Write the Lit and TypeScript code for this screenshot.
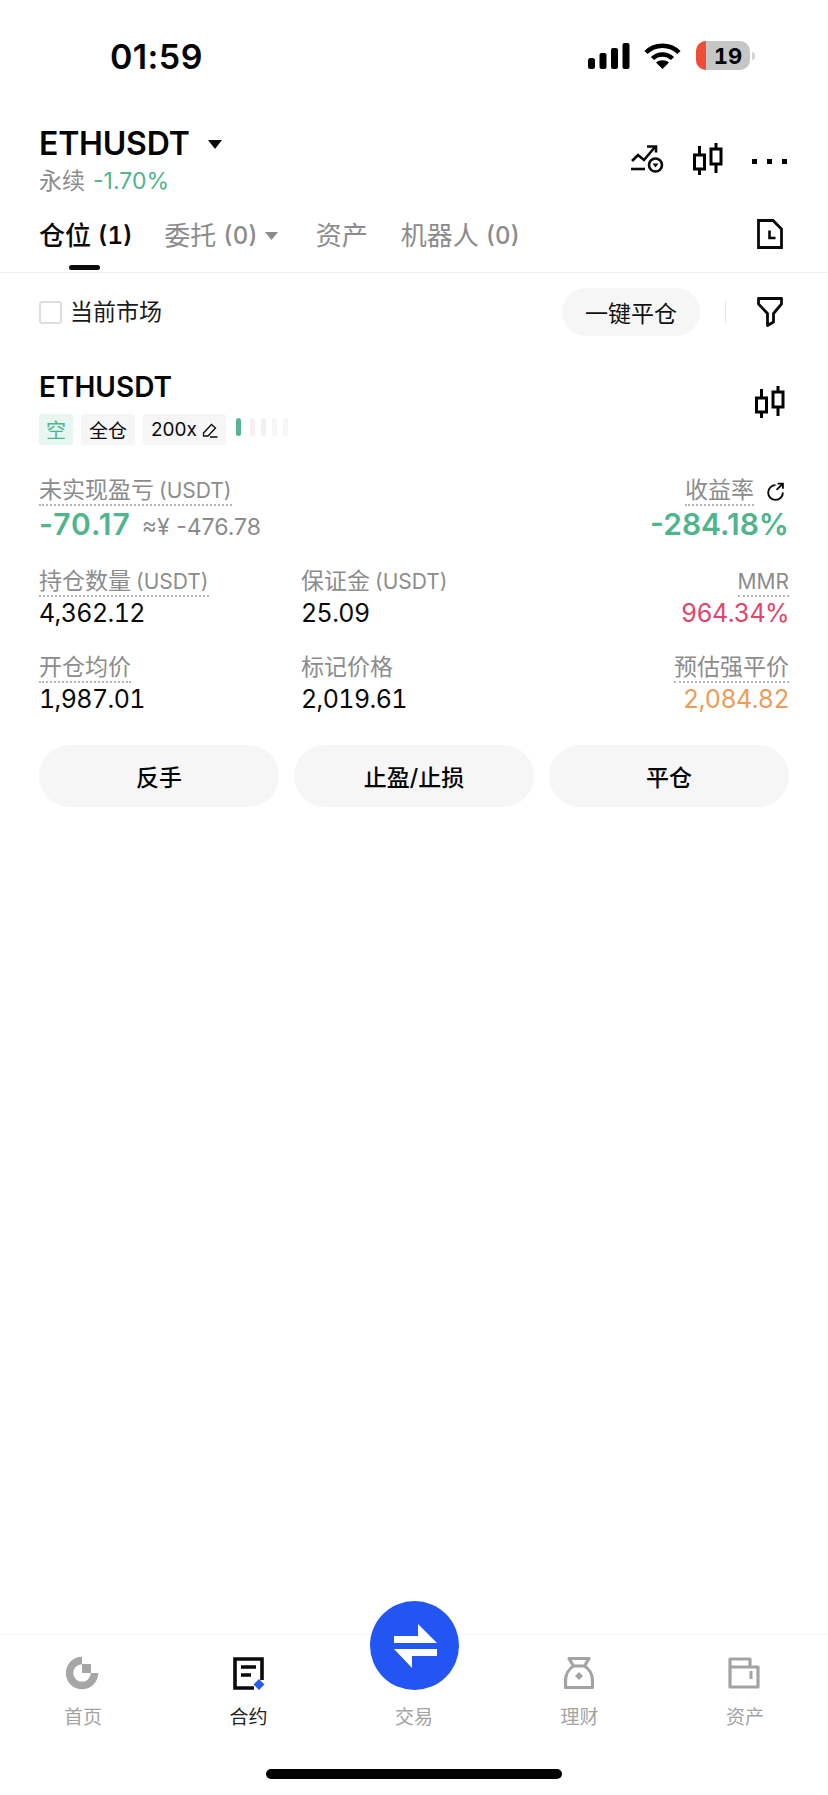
import { LitElement, html, css, svg } from "lit";
import { customElement } from "lit/decorators.js";

const candle = html`<svg width="30" height="32" viewBox="0 0 30 32" fill="none" stroke="#000" stroke-width="3"><rect x="1.5" y="12" width="10" height="14"/><rect x="18" y="6" width="10" height="15"/><path d="M6.5 3v8M6.5 26v6M23 0v6M23 21v9"/></svg>`;

const stats = [
  { l: "持仓数量", u: "(USDT)", v: "4,362.12" },
  { l: "保证金", u: "(USDT)", v: "25.09", plain: true },
  { l: "", u: "MMR", v: "964.34%", c: "red" },
  { l: "开仓均价", u: "", v: "1,987.01" },
  { l: "标记价格", u: "", v: "2,019.61", plain: true },
  { l: "预估强平价", u: "", v: "2,084.82", c: "orange" },
];

const navIcons = [
  svg`<path d="M16 4.5A12.5 12.5 0 1 0 28.5 17" fill="none" stroke="#a6a6a6" stroke-width="7.5"/><rect x="16" y="8" width="9" height="9" fill="#a6a6a6"/>`,
  svg`<path d="M30 24V3H3v29h19M9 11h15M9 19h10" fill="none" stroke="#0a0a0a" stroke-width="3.6"/><path d="M27 23l5.5 5.5-5.5 5.5-5.5-5.5z" fill="#2a5bea"/>`,
  null,
  svg`<path d="M6 2.5h20l-4.5 7.5c4 2.5 8 8 8 14.500v7h-27v-7c0-6.500 4-12 8-14.500zM10.500 10h11" fill="none" stroke="#a3a3a3" stroke-width="3.2" stroke-linejoin="round"/><path d="M16 16l4 4-4 4-4-4z" fill="#a3a3a3"/>`,
  svg`<path d="M2 3h20v8h8v20H2zM2 11h20" fill="none" stroke="#a3a3a3" stroke-width="3.200" stroke-linejoin="round"/><path d="M23 15v8" stroke="#a3a3a3" stroke-width="3"/>`,
];

const navLabels = ["首页", "合约", "交易", "理财", "资产"];

@customElement("app-root")
export class AppRoot extends LitElement {
  static styles = css`
    :host {
      display: block;
      width: 828px;
      height: 1795px;
      background: #fff;
      color: #050505;
      font-family: Inter, "Noto Sans CJK SC", sans-serif;
      overflow: hidden;
    }
    * { box-sizing: border-box; }
    svg { display: block; flex: none; }
    .page { display: flex; flex-direction: column; height: 1795px; }
    .main { flex: 1; }

    .status {
      height: 112px;
      display: flex;
      align-items: flex-start;
      justify-content: space-between;
      padding: 39px 73px 0 110px;
    }
    .time { font-size: 34px; line-height: 35px; font-weight: 600; letter-spacing: 0.4px; }
    .status-icons { display: flex; align-items: center; gap: 14px; margin-top: 2px; }
    .battery {
      width: 54px;
      height: 29px;
      border-radius: 10px;
      background: #c6c6c6;
      overflow: hidden;
      display: flex;
      align-items: center;
      font-size: 22px;
      font-weight: 700;
      font-variant-numeric: tabular-nums;
    }
    .battery-red { width: 10px; height: 100%; background: #ee4d36; flex: none; }
    .battery-num { flex: 1; text-align: center; }
    .battery-wrap { display: flex; align-items: center; gap: 2px; margin-left: 1px; }
    .nub { width: 3px; height: 8px; border-radius: 0 3px 3px 0; background: #d4d4d4; }

    .head {
      display: flex;
      justify-content: space-between;
      padding: 0 41px 0 39px;
      height: 94px;
    }
    .title-row { display: flex; align-items: center; gap: 18px; height: 38px; margin-top: 13px; }
    .title { font-size: 32px; line-height: 38px; font-weight: 600; letter-spacing: -0.2px; }
    .sub { display: flex; gap: 8px; font-size: 23px; line-height: 26px; margin-top: 5px; color: #8c8c8c; }
    .green { color: #4fb58c; }
    .head-icons { display: flex; align-items: center; gap: 29px; height: 94px; }
    .dots { display: flex; gap: 10px; margin-top: 4px; }
    .dots i { width: 5px; height: 5px; background: #000; display: block; }

    .tabs {
      height: 67px;
      display: flex;
      align-items: flex-start;
      padding: 11px 45px 0 39px;
      border-bottom: 1px solid #f1f1f1;
    }
    .tab { display: flex; align-items: center; font-size: 26px; line-height: 38px; color: #8b8b8b; margin-right: 33px; }
    .tab.on { color: #0a0a0a; font-weight: 500; position: relative; margin-right: 32px; }
    .tab b { font-weight: 500; font-size: 24px; margin-left: 7px; font-variant-numeric: tabular-nums; }
    .tab.on b { font-weight: 600; }
    .tab.on::after {
      content: "";
      position: absolute;
      left: 30px;
      bottom: -15px;
      width: 31px;
      height: 5px;
      border-radius: 3px;
      background: #0a0a0a;
    }
    .tab-caret { margin: 0 5px 0 7px; }
    .file { margin-left: auto; margin-top: 2px; }

    .filter {
      height: 64px;
      display: flex;
      align-items: center;
      padding: 0 45px 0 39px;
      margin-top: 7px;
    }
    .check { width: 23px; height: 23px; border: 2px solid #dedede; border-radius: 3px; }
    .market { font-size: 23px; line-height: 30px; margin-left: 8px; color: #1a1a1a; }
    .close-all {
      margin-left: auto;
      width: 138px;
      height: 48px;
      border-radius: 24px;
      background: #f6f6f6;
      display: flex;
      align-items: center;
      justify-content: center;
      font-size: 23px;
      color: #111;
    }
    .vline { width: 1px; height: 24px; background: #e9e9e9; margin: 0 31px 0 25px; }

    .pos { padding: 0 39px; }
    .pos-head { display: flex; justify-content: space-between; margin-top: 26px; height: 43px; }
    .pos-name { font-size: 28px; line-height: 34px; font-weight: 600; }
    .pos-head svg { margin: 16px 4px 0 0; }
    .tags { display: flex; align-items: center; gap: 8px; height: 31px; margin-top: 1px; }
    .tag {
      height: 31px;
      padding: 0 8px;
      background: #f6f6f6;
      border-radius: 3px;
      display: flex;
      align-items: center;
      gap: 5px;
      font-size: 19px;
      color: #0a0a0a;
    }
    .tag.short { background: #e7f7f0; color: #4fb58c; font-size: 20px; width: 34px; padding: 0; justify-content: center; }
    .lev { display: flex; align-items: center; gap: 6px; margin-top: -6px; margin-left: 2px; }
    .lev i { width: 5px; height: 18px; border-radius: 3px; background: #f1f1f1; display: block; }
    .lev i:first-child { background: #57b48f; margin-right: 3px; }
    .lev i:nth-child(n + 4) { background: #f6f6f6; }

    .pnl { display: flex; justify-content: space-between; margin-top: 32px; }
    .pnl-r { display: flex; flex-direction: column; align-items: flex-end; }
    .label-row { display: flex; align-items: center; gap: 11px; }
    .label-row svg { margin-right: 4px; }
    .label {
      font-size: 23px;
      line-height: 27px;
      color: #8c8c8c;
      border-bottom: 2px dotted #b5b5b5;
      width: fit-content;
      white-space: nowrap;
      display: flex;
      gap: 5px;
    }
    .label em { font-style: normal; font-size: 21px; }
    .label.plain { border-bottom-color: transparent; }
    .big { font-size: 30px; line-height: 34px; font-weight: 600; margin-top: 1px; }
    .loss { letter-spacing: 1px; }
    .approx { font-size: 23px; color: #8c8c8c; font-weight: 400; margin-left: 11px; }
    .stat-grid {
      display: grid;
      grid-template-columns: 262px 1fr auto;
      row-gap: 27px;
      margin-top: 24px;
    }
    .stat:nth-child(3n) { display: flex; flex-direction: column; align-items: flex-end; }
    .val {
      font-size: 25px;
      line-height: 28px;
      margin-top: 2px;
      color: #0a0a0a;
      font-variant-numeric: tabular-nums;
      letter-spacing: -0.6px;
    }
    .val.red { color: #e2446b; }
    .val.orange { color: #ee9b57; }

    .actions { display: grid; grid-template-columns: repeat(3, 240px); gap: 15px; margin-top: 32px; }
    .actions div {
      height: 62px;
      border-radius: 31px;
      background: #f6f6f6;
      display: flex;
      align-items: center;
      justify-content: center;
      font-size: 23px;
      font-weight: 500;
    }

    .nav {
      height: 161px;
      background: #fff;
      border-top: 1px solid #f5f5f5;
      display: grid;
      grid-template-columns: repeat(5, 165.5px);
      justify-content: center;
      position: relative;
    }
    .nav-item {
      display: flex;
      flex-direction: column;
      align-items: center;
      padding-top: 21px;
      font-size: 19px;
      line-height: 24px;
      color: #a3a3a3;
    }
    .nav-item.on { color: #222; }
    .nav-item svg { height: 35px; }
    .nav-item span { margin-top: 15px; }
    .nav-item .gap { height: 35px; }
    .fab {
      position: absolute;
      left: 370px;
      top: -34px;
      width: 89px;
      height: 89px;
      border-radius: 50%;
      background: #2255f2;
      display: flex;
      align-items: center;
      justify-content: center;
    }
    .homebar-wrap { display: flex; justify-content: center; position: absolute; left: 0; right: 0; bottom: 16px; }
    .homebar { width: 296px; height: 10px; border-radius: 5px; background: #000; }
  `;

  renderStatus() {
    return html`<div class="status">
      <div class="time">01:59</div>
      <div class="status-icons">
        <svg width="42" height="26" viewBox="0 0 42 26" fill="#000">
          <rect x="0" y="15" width="7" height="11" rx="2.500"/>
          <rect x="11.500" y="10" width="7" height="16" rx="2"/>
          <rect x="23" y="5" width="7" height="21" rx="2"/>
          <rect x="34.500" y="0" width="7" height="26" rx="2"/>
        </svg>
        <svg width="37" height="26" viewBox="0 0 37 26" fill="none" stroke="#000" stroke-width="4.500">
          <path d="M2 9.500C11 .5 26 .5 35 9.500"/>
          <path d="M8.500 15.500C14 10 23 10 28.500 15.500"/>
          <path d="M18.500 26l-6.500-6.500c3.500-3 9.500-3 13 0z" fill="#000" stroke="none"/>
        </svg>
        <div class="battery-wrap">
          <div class="battery"><span class="battery-red"></span><span class="battery-num">19</span></div>
          <span class="nub"></span>
        </div>
      </div>
    </div>`;
  }

  renderHead() {
    return html`<div class="head">
      <div>
        <div class="title-row">
          <span class="title">ETHUSDT</span>
          <svg width="14" height="9" viewBox="0 0 14 9"><path d="M0 0h14L7 9z" fill="#0a0a0a"/></svg>
        </div>
        <div class="sub"><span>永续</span><span class="green">-1.70%</span></div>
      </div>
      <div class="head-icons">
        <svg width="33" height="28" viewBox="0 0 33 28" fill="none" stroke="#0a0a0a" stroke-width="2.600">
          <path d="M1 16l6-6 6 5L24 2"/>
          <path d="M16 1.500h9v6"/>
          <path d="M0 24h14"/>
          <circle cx="24.500" cy="20" r="6.500"/>
          <path d="M21.500 18.500h6l-3 4z" fill="#0a0a0a" stroke="none"/>
        </svg>
        ${candle}
        <div class="dots"><i></i><i></i><i></i></div>
      </div>
    </div>`;
  }

  renderTabs() {
    return html`<div class="tabs">
      <div class="tab on">仓位<b>(1)</b></div>
      <div class="tab">委托<b>(0)</b>
        <svg class="tab-caret" width="13" height="8" viewBox="0 0 13 8"><path d="M0 0h13L6.500 8z" fill="#8b8b8b"/></svg>
      </div>
      <div class="tab">资产</div>
      <div class="tab">机器人<b>(0)</b></div>
      <svg class="file" width="26" height="30" viewBox="0 0 26 30" fill="none" stroke="#0a0a0a" stroke-width="2.800">
        <path d="M1.500 1.500H16L24.500 10V28.500H1.500z"/>
        <path d="M12.500 11.500v7.500h6" stroke-width="2.600"/>
      </svg>
    </div>`;
  }

  renderFilter() {
    return html`<div class="filter">
      <div class="check"></div>
      <span class="market">当前市场</span>
      <div class="close-all">一键平仓</div>
      <div class="vline"></div>
      <svg width="26" height="30" viewBox="0 0 26 30" fill="none" stroke="#0a0a0a" stroke-width="2.800" stroke-linejoin="round">
        <path d="M1.500 1.500H24.500V7L16.500 16.500V25L10.500 28.500V16.500L1.500 7z"/>
      </svg>
    </div>`;
  }

  renderPosition() {
    return html`<div class="pos">
      <div class="pos-head">
        <div class="pos-name">ETHUSDT</div>
        ${candle}
      </div>
      <div class="tags">
        <div class="tag short">空</div>
        <div class="tag">全仓</div>
        <div class="tag">200x
          <svg width="16" height="16" viewBox="0 0 16 16" fill="none" stroke="#0a0a0a" stroke-width="1.300">
            <path d="M1.500 11L9.500 2.500l4 3.500L6 14H1.500zM8 15h7.500"/>
          </svg>
        </div>
        <div class="lev"><i></i><i></i><i></i><i></i><i></i></div>
      </div>
      <div class="pnl">
        <div>
          <div class="label"><span>未实现盈亏</span><em>(USDT)</em></div>
          <div class="big green"><span class="loss">-70.17</span><span class="approx">≈¥ -476.78</span></div>
        </div>
        <div class="pnl-r">
          <div class="label-row">
            <div class="label">收益率</div>
            <svg width="20" height="20" viewBox="0 0 19 19" fill="none" stroke="#0a0a0a" stroke-width="1.800">
              <path d="M10 3a7 7 0 1 0 7 7"/><path d="M12 1.500h5v5M17 1.500l-6 6"/>
            </svg>
          </div>
          <div class="big green">-284.18%</div>
        </div>
      </div>
      <div class="stat-grid">
        ${stats.map(
          (s) => html`<div class="stat">
            <div class="label ${s.plain ? "plain" : ""}">
              ${s.l ? html`<span>${s.l}</span>` : ""}${s.u ? html`<em>${s.u}</em>` : ""}
            </div>
            <div class="val ${s.c ?? ""}">${s.v}</div>
          </div>`
        )}
      </div>
      <div class="actions"><div>反手</div><div>止盈/止损</div><div>平仓</div></div>
    </div>`;
  }

  renderNav() {
    return html`<div class="nav">
      ${navLabels.map(
        (label, i) => html`<div class="nav-item ${i === 1 ? "on" : ""}">
          ${navIcons[i]
            ? html`<svg width="34" height="35" viewBox="0 0 34 35">${navIcons[i]}</svg>`
            : html`<div class="gap"></div>`}
          <span>${label}</span>
        </div>`
      )}
      <div class="fab">
        <svg width="44" height="44" viewBox="0 0 44 44" fill="#fff">
          <path d="M1 12H25V0L44 19H1z"/>
          <path d="M1 25H44V32H19V44z"/>
        </svg>
      </div>
      <div class="homebar-wrap"><div class="homebar"></div></div>
    </div>`;
  }

  render() {
    return html`<div class="page">
      <div class="main">
        ${this.renderStatus()} ${this.renderHead()} ${this.renderTabs()} ${this.renderFilter()} ${this.renderPosition()}
      </div>
      ${this.renderNav()}
    </div>`;
  }
}
